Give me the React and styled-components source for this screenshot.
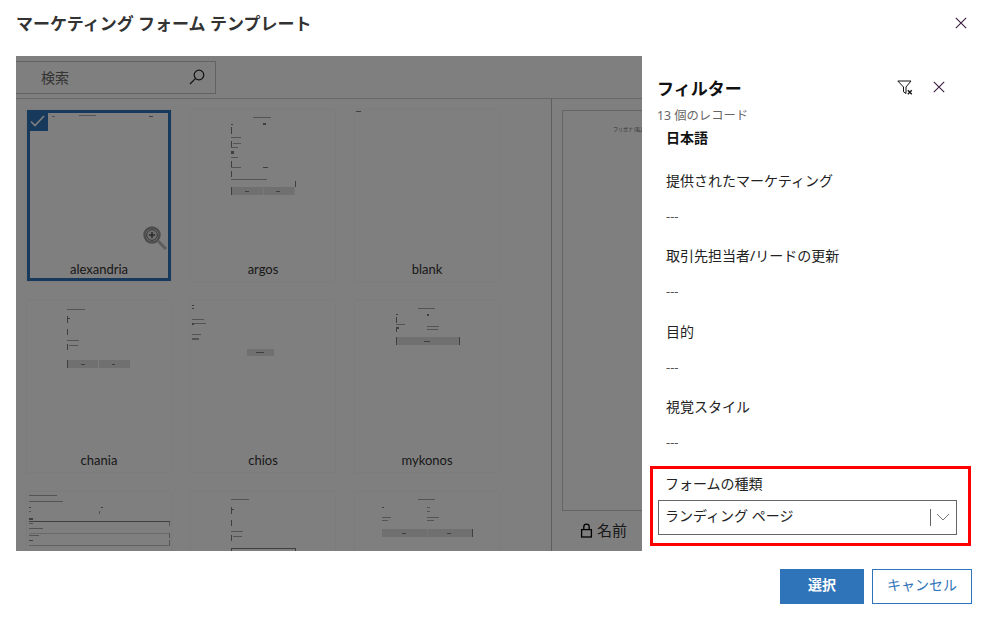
import React from 'react';
import styled, { createGlobalStyle } from 'styled-components';

const Global = createGlobalStyle`
  html, body { margin: 0; padding: 0; background: #fff; }
  body { font-family: "Noto Sans", "Noto Sans CJK JP", sans-serif; color: #1a1a1a; }
`;

const Dialog = styled.div`
  width: 989px;
  height: 622px;
  display: flex;
  flex-direction: column;
  overflow: hidden;
`;

const Header = styled.div`
  height: 56px;
  flex: none;
  padding: 13px 22px 0 16px;
  box-sizing: border-box;
  display: flex;
  justify-content: space-between;
  align-items: flex-start;
`;

const Title = styled.h1`
  margin: 0;
  font-size: 17px;
  line-height: 22px;
  font-weight: 700;
  color: #333;
`;

const IconButton = styled.span`
  display: flex;
  margin-top: ${p => p.$top || 0}px;
  color: #3b1a40;
`;

const Body = styled.div`
  flex: none;
  height: 495px;
  display: flex;
`;

const Main = styled.div`
  position: relative;
  width: 626px;
  margin-left: 16px;
  flex: none;
  display: flex;
  flex-direction: column;
  overflow: hidden;
`;

const Dim = styled.div`
  position: absolute;
  inset: 0;
  background: rgba(0, 0, 0, 0.5);
`;

const Toolbar = styled.div`
  height: 43px;
  flex: none;
  box-sizing: border-box;
  padding-top: 5px;
  border-bottom: 1px solid #d0d0d0;
`;

const Search = styled.div`
  width: 200px;
  height: 33px;
  box-sizing: border-box;
  border: 1px solid #c4c4c4;
  border-left: 0;
  padding: 0 10px 2px 25px;
  display: flex;
  align-items: center;
  justify-content: space-between;
  font-size: 14px;
  color: #666;
`;

const Content = styled.div`
  flex: 1;
  min-height: 0;
  display: flex;
`;

const Gallery = styled.div`
  width: 536px;
  flex: none;
  box-sizing: border-box;
  padding: 11px 0 0 11px;
  border-right: 1px solid #bdbdbd;
  display: grid;
  grid-template-columns: repeat(3, 144px);
  grid-auto-rows: 171px;
  gap: 20px;
  overflow: hidden;
`;

const Card = styled.div`
  position: relative;
  box-sizing: border-box;
  background: #fff;
  box-shadow: 0 0 3px rgba(0, 0, 0, 0.08);
  outline: ${p => (p.$selected ? '3px solid #2f74b8' : 'none')};
  outline-offset: -3px;
`;

const Thumb = styled.svg`
  display: block;
  position: absolute;
  left: 0;
  top: 0;
  opacity: 0.5;
`;

const CardName = styled.div`
  position: absolute;
  left: 0;
  right: 0;
  bottom: 3px;
  text-align: center;
  font-family: Lato, "Noto Sans", sans-serif;
  font-size: 13px;
  line-height: 18px;
  color: #333;
`;

const Badge = styled.div`
  position: absolute;
  left: 0;
  top: 0;
  width: 21px;
  height: 21px;
  background: #2f74b8;
  display: flex;
  align-items: center;
  justify-content: center;
`;

const Magnifier = styled.svg`
  position: absolute;
  left: 115px;
  top: 115px;
`;

const Preview = styled.div`
  flex: 1;
  min-width: 0;
  padding: 11px 0 0 10px;
  display: flex;
  flex-direction: column;
`;

const PreviewFrame = styled.div`
  height: 401px;
  flex: none;
  margin-right: -4px;
  box-sizing: border-box;
  border: 1px solid #c8c8c8;
  padding: 14px 0 0 50px;
  font-size: 5px;
  line-height: 8px;
  white-space: nowrap;
  color: #666;
`;

const PreviewName = styled.div`
  margin-top: 9px;
  padding-left: 18px;
  display: flex;
  align-items: center;
  gap: 4px;
  font-size: 15px;
  line-height: 20px;
  color: #333;
`;

const Filters = styled.div`
  width: 347px;
  flex: none;
  box-sizing: border-box;
  padding: 18px 18px 0 7px;
  display: flex;
  flex-direction: column;
`;

const FilterHead = styled.div`
  display: flex;
  align-items: center;
  justify-content: space-between;
  height: 26px;
  padding: 0 26px 0 8px;
`;

const FilterTitle = styled.div`
  font-size: 17px;
  font-weight: 700;
  color: #111;
`;

const FilterActions = styled.div`
  display: flex;
  align-items: center;
  gap: 20px;
`;

const Count = styled.div`
  padding-left: 8px;
  margin-top: 7px;
  font-size: 12.3px;
  line-height: 18px;
  color: #666;
`;

const Language = styled.div`
  padding-left: 17px;
  margin-top: 3px;
  font-size: 14px;
  font-weight: 700;
  line-height: 20px;
  color: #111;
`;

const GroupList = styled.div`
  margin-top: 23px;
`;

const Group = styled.div`
  padding-left: 17px;
  height: 75.4px;
  box-sizing: border-box;
`;

const GroupLabel = styled.div`
  font-size: 14px;
  line-height: 20px;
  color: #222;
`;

const GroupValue = styled.div`
  margin-top: 15px;
  font-size: 13px;
  line-height: 20px;
  color: #555;
`;

const Highlight = styled.div`
  margin: -7px 0 0 1px;
  height: 80px;
  box-sizing: border-box;
  border: 3px solid #f00;
  padding: 5px 11px 0 5px;
`;

const HighlightLabel = styled.div`
  padding-left: 7px;
  font-size: 14px;
  line-height: 20px;
  color: #222;
`;

const Select = styled.div`
  margin-top: 6px;
  height: 35px;
  box-sizing: border-box;
  border: 1px solid #666;
  padding: 0 6px 0 6px;
  display: flex;
  align-items: center;
  font-size: 14px;
  color: #222;
`;

const SelectText = styled.span`
  flex: 1;
  padding-bottom: 4px;
`;

const SelectDivider = styled.span`
  width: 1px;
  height: 17px;
  background: #666;
  margin-right: 5px;
`;

const Footer = styled.div`
  flex: 1;
  display: flex;
  justify-content: flex-end;
  gap: 8px;
  padding: 18px 17px 0 0;
`;

const Button = styled.button`
  height: 35px;
  width: ${p => p.$width}px;
  box-sizing: border-box;
  border: 1px solid #2f74b8;
  background: ${p => (p.$primary ? '#2f74b8' : '#fff')};
  color: ${p => (p.$primary ? '#fff' : '#2f74b8')};
  font-family: inherit;
  font-size: 14px;
  line-height: 1;
  font-weight: ${p => (p.$primary ? 700 : 400)};
  padding: 0 0 3px;
`;

const CloseIcon = ({ size = 12, width = 1.1 }) => (
  <svg width={size} height={size} viewBox="0 0 12 12" fill="none" stroke="currentColor" strokeWidth={width}>
    <path d="M0.8 0.8 L11.2 11.2 M11.2 0.8 L0.8 11.2" />
  </svg>
);

const SearchIcon = () => (
  <svg width="16" height="16" viewBox="0 0 16 16" fill="none" stroke="#222" strokeWidth="1.2">
    <circle cx="10" cy="6" r="4.8" />
    <path d="M6.4 9.6 L1 15" />
  </svg>
);

const ClearFilterIcon = () => (
  <svg width="16" height="15" viewBox="0 0 16 15" fill="none" stroke="#111" strokeWidth="1">
    <path d="M0.8 1 H14 L9 7 V13.5 L6.5 11.8 V7 Z" />
    <path d="M10.8 10.2 L14.8 14.2 M14.8 10.2 L10.8 14.2" strokeWidth="1.3" />
  </svg>
);

const LockIcon = () => (
  <svg width="13" height="15" viewBox="0 0 13 15" fill="none" stroke="#000" strokeWidth="1.3">
    <rect x="1.6" y="6.6" width="9.8" height="7.4" />
    <path d="M3.8 6.6 V3.8 a2.7 2.7 0 0 1 5.4 0 V6.6" />
  </svg>
);

const ChevronIcon = () => (
  <svg width="14" height="8" viewBox="0 0 14 8" fill="none" stroke="#777" strokeWidth="1">
    <path d="M1 1 L7 7 L13 1" />
  </svg>
);

// tiny form drawings inside the template cards: [x, y, w, h, colour]
const D = '#000';
const G = '#555';
const B = '#c4c4c4';

const thumbs = {
  alexandria: [[25, 6, 3, 1, G], [52, 5, 17, 1, G], [122, 6, 4, 1, D]],
  argos: [
    [62, 7, 18, 1, G], [40, 14, 2, 1, D], [72, 13, 3, 2, D], [40, 17, 1, 7, D],
    [40, 27, 10, 1, G], [40, 31, 1, 7, D], [42, 33, 8, 1, G],
    [40, 37, 7, 1, G], [40, 41, 3, 3, D], [40, 47, 7, 1, G], [40, 51, 1, 6, D],
    [40, 57, 10, 1, G], [72, 57, 5, 1, D], [40, 61, 1, 6, D],
    [40, 69, 36, 1, G], [104, 71, 1, 6, D], [40, 77, 32, 8, B], [72.5, 77, 31, 8, B], [40, 77, 1, 8, D],
    [54, 81, 4, 1, D], [85, 81, 4, 1, D]
  ],
  blank: [[1, 1, 5, 1, D]],
  chania: [
    [40, 8, 18, 1, G], [40, 15, 1, 7, D], [41, 17, 2, 1, D], [40, 28, 1, 6, D],
    [40, 39, 12, 1, G], [40, 43, 1, 6, D], [42, 44, 9, 1, G],
    [40, 59, 31, 8, B], [72, 59, 31, 8, B], [40, 59, 1, 8, D], [54, 63, 4, 1, D], [85, 63, 3, 1, D]
  ],
  chios: [
    [1, 4, 2, 1, D], [1, 7, 2, 1, D], [1, 18, 12, 1, G], [1, 22, 14, 1, G], [1, 22, 2, 2, D],
    [1, 33, 9, 1, G], [1, 37, 7, 2, G],
    [56, 48, 27, 7, B], [65, 51, 8, 1, D]
  ],
  mykonos: [
    [63, 7, 17, 1, G], [41, 13, 2, 1, D], [72, 13, 2, 2, D], [41, 16, 1, 6, D],
    [41, 23, 9, 1, G], [41, 26, 3, 2, D], [41, 28, 1, 3, D], [72, 25, 12, 1, G], [72, 28, 11, 1, G],
    [41, 36, 63, 8, B], [41, 36, 1, 8, D], [104, 36, 1, 8, D], [69, 40, 6, 1, D]
  ],
  row3a: [
    [2, 3, 28, 1, G], [2, 9, 34, 1, G], [2, 15, 2, 1, D], [74, 15, 2, 1, D], [2, 19, 2, 1, G], [72, 19, 1, 3, G],
    [2, 26, 4, 2, D], [2, 29, 141, 1, D], [2, 31, 4, 1, G], [142, 30, 1, 4, G],
    [2, 36, 14, 1, G], [2, 41, 141, 1, '#aaa'], [2, 43, 10, 1, G], [142, 41, 1, 5, G],
    [2, 48, 4, 1, D], [2, 53, 141, 1, '#888'], [142, 48, 1, 5, G], [2, 59, 14, 1, G]
  ],
  row3b: [
    [40, 7, 18, 1, G], [40, 15, 1, 7, D], [41, 17, 2, 1, D], [40, 28, 1, 6, D],
    [40, 39, 12, 1, G], [40, 43, 1, 6, D], [42, 44, 9, 1, G], [40, 56, 64, 1, D], [40, 56, 1, 4, D], [104, 56, 1, 4, D]
  ],
  row3c: [
    [63, 7, 17, 1, G], [27, 15, 2, 1, D], [72, 15, 3, 1, G], [72, 19, 3, 1, G],
    [27, 25, 9, 1, G], [27, 28, 6, 1, G], [72, 25, 12, 1, G], [72, 28, 7, 1, G],
    [27, 37, 45, 8, B], [72.5, 37, 45, 8, B], [117, 37, 1, 8, D], [47, 41, 4, 1, D], [92, 41, 4, 1, D]
  ]
};

const cards = [
  { id: 'alexandria', name: 'alexandria', selected: true },
  { id: 'argos', name: 'argos' },
  { id: 'blank', name: 'blank' },
  { id: 'chania', name: 'chania' },
  { id: 'chios', name: 'chios' },
  { id: 'mykonos', name: 'mykonos' },
  { id: 'row3a' },
  { id: 'row3b' },
  { id: 'row3c' }
];

const groups = ['提供されたマーケティング', '取引先担当者/リードの更新', '目的', '視覚スタイル'];

const TemplateCard = ({ id, name, selected }) => (
  <Card $selected={selected}>
    <Thumb width="144" height="150">
      {thumbs[id].map(([x, y, w, h, c], i) => (
        <rect key={i} x={x} y={y} width={w} height={h} fill={c} />
      ))}
    </Thumb>
    {name && <CardName>{name}</CardName>}
    {selected && (
      <Badge>
        <svg width="15" height="12" viewBox="0 0 15 12" fill="none" stroke="#fff" strokeWidth="1.6">
          <path d="M1 6.5 L5 10.5 L14 1" />
        </svg>
      </Badge>
    )}
    {selected && (
      <Magnifier width="26" height="26" viewBox="0 0 26 26" fill="none">
        <circle cx="10" cy="10" r="7.5" stroke="#999" strokeWidth="2.4" />
        <circle cx="10" cy="10" r="5.4" fill="#ddd" stroke="#666" strokeWidth="1" />
        <path d="M7 10 H13 M10 7 V13" stroke="#555" strokeWidth="1.5" />
        <path d="M15.5 15.5 L24 24" stroke="#bbb" strokeWidth="3" />
      </Magnifier>
    )}
  </Card>
);

export default function App() {
  return (
    <Dialog>
      <Global />
      <Header>
        <Title>マーケティング フォーム テンプレート</Title>
        <IconButton $top={4}>
          <CloseIcon />
        </IconButton>
      </Header>
      <Body>
        <Main>
          <Toolbar>
            <Search>
              検索
              <SearchIcon />
            </Search>
          </Toolbar>
          <Content>
            <Gallery>
              {cards.map(c => (
                <TemplateCard key={c.id} {...c} />
              ))}
            </Gallery>
            <Preview>
              <PreviewFrame>フリガナ (私)</PreviewFrame>
              <PreviewName>
                <LockIcon />
                名前
              </PreviewName>
            </Preview>
          </Content>
          <Dim />
        </Main>
        <Filters>
          <FilterHead>
            <FilterTitle>フィルター</FilterTitle>
            <FilterActions>
              <ClearFilterIcon />
              <IconButton>
                <CloseIcon />
              </IconButton>
            </FilterActions>
          </FilterHead>
          <Count>13 個のレコード</Count>
          <Language>日本語</Language>
          <GroupList>
            {groups.map(label => (
              <Group key={label}>
                <GroupLabel>{label}</GroupLabel>
                <GroupValue>---</GroupValue>
              </Group>
            ))}
          </GroupList>
          <Highlight>
            <HighlightLabel>フォームの種類</HighlightLabel>
            <Select>
              <SelectText>ランディング ページ</SelectText>
              <SelectDivider />
              <ChevronIcon />
            </Select>
          </Highlight>
        </Filters>
      </Body>
      <Footer>
        <Button $primary $width={84}>選択</Button>
        <Button $width={100}>キャンセル</Button>
      </Footer>
    </Dialog>
  );
}
